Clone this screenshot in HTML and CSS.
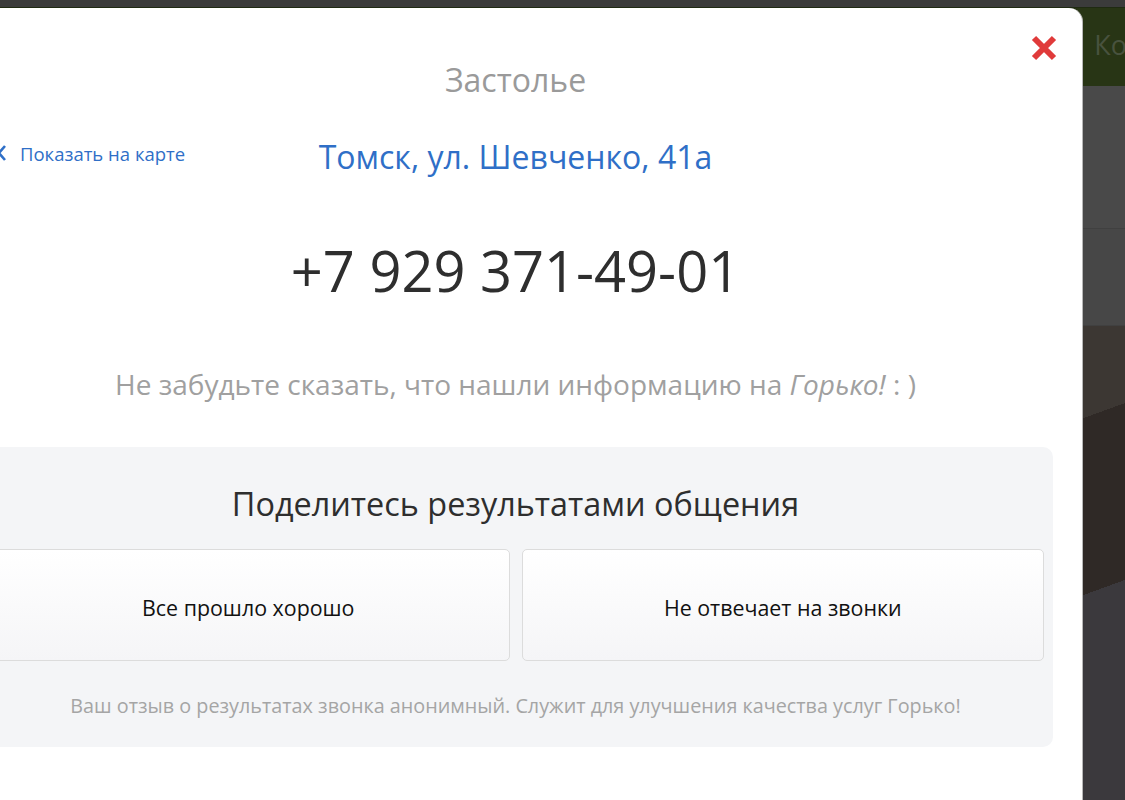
FILE: index.html
```html
<!DOCTYPE html>
<html lang="ru">
<head>
  <meta charset="UTF-8" />
  <meta name="viewport" content="width=device-width, initial-scale=1.0"/>
  <title>Застолье - контакты</title>
  <link rel="stylesheet" href="styles.css">
</head>
<body>

<div class="page">
  <div class="topbar"></div>
  <div class="header"><span class="header-link">Ко</span></div>
  <div class="section"></div>
  <div class="section section-dark"></div>
  <div class="photo"></div>
</div>

<div class="modal">
  <button class="close" title="Закрыть">
    <svg width="26" height="26" viewBox="0 0 26 26">
      <path d="M3 3 L23 23 M23 3 L3 23" stroke="#e03a3a" stroke-width="6" stroke-linecap="butt"/>
    </svg>
  </button>

  <div class="venue">Застолье</div>

  <div class="address-row">
    <a class="map-link" href="#">
      <svg width="10" height="20" viewBox="0 0 10 20">
        <path d="M8 3 L2 10 L8 17" fill="none" stroke="#2f6fc7" stroke-width="2.6"/>
      </svg>
      Показать на карте
    </a>
    <div class="address">Томск, ул. Шевченко, 41а</div>
  </div>

  <div class="phone">+7 929 371-49-01</div>

  <div class="hint">Не забудьте сказать, что нашли информацию на <i>Горько!</i> : )</div>

  <div class="feedback">
    <div class="feedback-title">Поделитесь результатами общения</div>
    <div class="feedback-buttons">
      <button class="fb-btn">Все прошло хорошо</button>
      <button class="fb-btn">Не отвечает на звонки</button>
    </div>
    <div class="feedback-note">Ваш отзыв о результатах звонка анонимный. Служит для улучшения качества услуг Горько!</div>
  </div>
</div>

</body>
</html>
```

FILE: styles.css
```css
body {
  margin: 0;
  font-family: "Open Sans", "Noto Sans", sans-serif;
  background: #3a3a3a;
  overflow: hidden;
  height: 800px;
}
.page {
  height: 800px;
}
.topbar {
  height: 7px;
  background: #3b3b3b;
  border-bottom: 1px solid #1f2a12;
}
.header {
  height: 78px;
  background: #283515;
  display: flex;
  justify-content: flex-end;
  align-items: center;
}
.header-link {
  color: #48523e;
  font-size: 27px;
  margin-right: -2px;
  padding-bottom: 6px;
}
.section {
  height: 142px;
  background: #494949;
  border-bottom: 1px solid #404040;
}
.section-dark {
  height: 96px;
  background: #474747;
}
.photo {
  height: 475px;
  background:
    linear-gradient(160deg, transparent 0 40%, #3c3733 40% 55%, #2f2926 55% 75%, #3b393d 75%),
    linear-gradient(180deg, #3c3531 0 6%, #241c1a 6% 12%, #403d3a 12%);
}

.modal {
  position: absolute;
  top: 8px;
  left: -51px;
  width: 1134px;
  height: 820px;
  background: #fff;
  border-radius: 0 14px 0 0;
  border-right: 1px solid #b8b8b8;
  box-sizing: border-box;
  padding-top: 52px;
  text-align: center;
}
.close {
  position: absolute;
  top: 27px;
  right: 25px;
  padding: 0;
  border: none;
  background: none;
  cursor: pointer;
}
.venue {
  font-size: 32px;
  line-height: 40px;
  color: #9a9a9a;
}
.address-row {
  margin-top: 37px;
  display: grid;
  grid-template-columns: 1fr auto 1fr;
  align-items: center;
  height: 40px;
}
.map-link {
  justify-self: start;
  margin-left: 48px;
  padding-bottom: 8px;
  display: flex;
  align-items: center;
  gap: 13px;
  color: #2f6fc7;
  font-size: 18.5px;
  text-decoration: none;
}
.address {
  font-size: 32px;
  line-height: 40px;
  color: #2f6fc7;
}
.phone {
  margin-top: 58px;
  font-size: 56px;
  line-height: 70px;
  color: #2e2e2e;
}
.hint {
  margin-top: 61px;
  font-size: 28px;
  line-height: 36px;
  color: #a0a0a0;
}
.feedback {
  margin: 45px 29px 0 29px;
  background: #f4f5f7;
  border-radius: 10px;
  padding: 36px 9px 29px;
}
.feedback-title {
  font-size: 32.4px;
  line-height: 40px;
  color: #2e2e2e;
}
.feedback-buttons {
  margin-top: 26px;
  display: flex;
  gap: 12px;
}
.fb-btn {
  flex: 1;
  height: 112px;
  padding-top: 6px;
  border: 1px solid #dcdcdc;
  border-radius: 5px;
  background: linear-gradient(#ffffff, #f5f5f7);
  font-family: inherit;
  font-size: 21.4px;
  color: #111;
  cursor: pointer;
}
.feedback-note {
  margin-top: 33px;
  font-size: 19.8px;
  line-height: 24px;
  color: #a5a5a5;
}
```
